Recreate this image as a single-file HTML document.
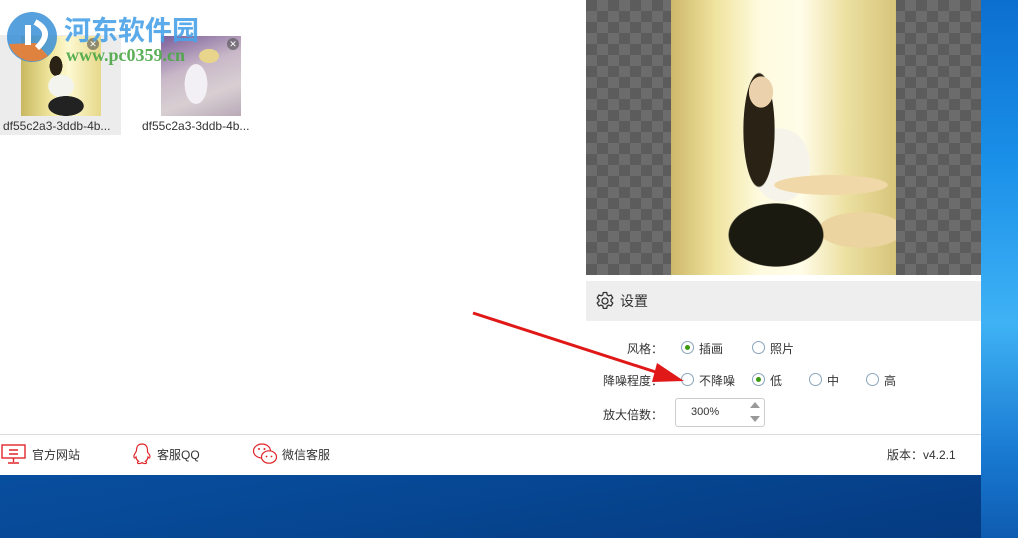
<!DOCTYPE html>
<html><head><meta charset="utf-8"><style>
*{margin:0;padding:0;box-sizing:border-box}
body{width:1018px;height:538px;position:relative;overflow:hidden;font-family:"Liberation Sans","Noto Sans CJK SC",sans-serif;font-size:12px;color:#333;
background:linear-gradient(170deg,#0d62c0 0%,#0a58b0 45%,#074a98 75%,#053a80 100%)}
.desk{position:absolute;left:981px;top:0;width:37px;height:538px;background:linear-gradient(180deg,#0c6fd0 0%,#1a90e8 30%,#3fb2f5 60%,#1878d0 85%,#0e5cb0 100%)}
.win{position:absolute;left:0;top:0;width:981px;height:475px;background:#fff}
.abs{position:absolute}
.chk{left:586px;top:0;width:395px;height:275px;background-color:#5c5c5c;
background-image:conic-gradient(#6c6c6c 25%,transparent 0 50%,#6c6c6c 0 75%,transparent 0);background-size:22px 22px}
.photo{left:671px;top:0;width:225px;height:275px;background:
radial-gradient(ellipse 17px 22px at 90px 92px,#ecd2ac 70%,transparent 72%),
radial-gradient(ellipse 22px 80px at 88px 130px,#2a2214 70%,transparent 72%),
radial-gradient(ellipse 80px 14px at 160px 185px,#f0d8a8 70%,transparent 72%),
radial-gradient(ellipse 38px 48px at 110px 165px,#f6f4ea 75%,transparent 77%),
radial-gradient(ellipse 60px 40px at 105px 235px,#1b1a10 78%,transparent 80%),
radial-gradient(ellipse 60px 25px at 190px 230px,#ecd4a0 70%,transparent 72%),
linear-gradient(90deg,#cdb86a 0%,#f0e4a0 20%,#fffbe0 40%,#fffce8 58%,#ece0a0 78%,#d6c47a 100%)}
.sethd{left:586px;top:281px;width:395px;height:40px;background:#eee;font-size:14px;line-height:40px;padding-left:34px}
.lbl{font-size:12px;color:#333}
.radio{position:absolute;width:13px;height:13px;border:1px solid #8aa4bd;border-radius:50%;background:#fff}
.radio.on::after{content:"";position:absolute;left:3px;top:3px;width:5px;height:5px;border-radius:50%;background:#3c9a10}
.foot{left:0;top:434px;width:981px;height:41px;border-top:1px solid #ddd}
.thumbsel{left:0;top:35px;width:121px;height:100px;background:#ececec}
</style></head><body>
<div class="desk"></div>
<div class="win">
 <div class="abs thumbsel"></div>
 <div class="abs" style="left:21px;top:36px;width:80px;height:80px;background:
 radial-gradient(ellipse 25px 14px at 45px 70px,#222 70%,transparent 72%),
 radial-gradient(ellipse 18px 16px at 40px 50px,#f4f4ee 70%,transparent 72%),
 radial-gradient(ellipse 9px 14px at 35px 30px,#2a2214 70%,transparent 72%),
 linear-gradient(90deg,#c9b860,#f3eaa4 40%,#fdf8d0 60%,#e6d88a)"></div>
 <div class="abs" style="left:87px;top:38px;width:12px;height:12px;border-radius:50%;background:rgba(80,80,80,.6);color:#fff;font-size:9px;line-height:12px;text-align:center">✕</div>
 <div class="abs" style="left:161px;top:36px;width:80px;height:80px;background:
 radial-gradient(ellipse 16px 28px at 35px 48px,#f2f0f4 70%,transparent 72%),
 radial-gradient(ellipse 14px 10px at 48px 20px,#e8d48a 70%,transparent 72%),
 linear-gradient(160deg,#7b5e9a,#c9b8c8 40%,#d8cfd2 70%,#b9a9b8)"></div>
 <div class="abs" style="left:227px;top:38px;width:12px;height:12px;border-radius:50%;background:rgba(80,80,80,.6);color:#fff;font-size:9px;line-height:12px;text-align:center">✕</div>
 <div class="abs" style="left:3px;top:119px;font-size:12px;color:#333">df55c2a3-3ddb-4b...</div>
 <div class="abs" style="left:142px;top:119px;font-size:12px;color:#333">df55c2a3-3ddb-4b...</div>
 <svg class="abs" style="left:4px;top:10px" width="58" height="54" viewBox="0 0 58 54"><circle cx="28" cy="27" r="25" fill="#3a8fd8" opacity=".85"/><path d="M5 34 A25 25 0 0 0 44 46 L32 33 Z" fill="#f08030" opacity=".9"/><rect x="21" y="15" width="6" height="20" fill="#fff"/><path d="M31 12 Q50 22 33 38" stroke="#fff" stroke-width="6" fill="none"/></svg>
 <div class="abs" style="left:64px;top:12px;font-size:27px;font-weight:bold;color:#4aa2e8;opacity:.9;font-family:'Noto Sans CJK SC',sans-serif;line-height:34px">河东软件园</div>
 <div class="abs" style="left:66px;top:45px;font-size:18px;font-weight:bold;color:#4aa845;font-family:'Liberation Serif',serif;opacity:.9">www.pc0359.cn</div>

 <div class="abs chk"></div>
 <div class="abs photo"></div>
 <div class="abs sethd">设置</div>
 <svg class="abs" style="left:595px;top:291px" width="20" height="20" viewBox="0 0 20 20"><path d="M8.3 1.5h3.4l.5 2.4 1.6.9 2.3-.8 1.7 2.9-1.8 1.6v1.9l1.8 1.6-1.7 2.9-2.3-.8-1.6.9-.5 2.4H8.3l-.5-2.4-1.6-.9-2.3.8-1.7-2.9 1.8-1.6V8.5L2.2 6.9l1.7-2.9 2.3.8 1.6-.9z" fill="none" stroke="#333" stroke-width="1.3" stroke-linejoin="round"/><circle cx="10" cy="10" r="3" fill="none" stroke="#333" stroke-width="1.3"/></svg>

 <div class="abs lbl" style="left:627px;top:340px">风格：</div>
 <div class="radio on" style="left:681px;top:341px"></div><div class="abs lbl" style="left:699px;top:340px">插画</div>
 <div class="radio" style="left:752px;top:341px"></div><div class="abs lbl" style="left:770px;top:340px">照片</div>
 <div class="abs lbl" style="left:603px;top:372px">降噪程度：</div>
 <div class="radio" style="left:681px;top:373px"></div><div class="abs lbl" style="left:699px;top:372px">不降噪</div>
 <div class="radio on" style="left:752px;top:373px"></div><div class="abs lbl" style="left:770px;top:372px">低</div>
 <div class="radio" style="left:809px;top:373px"></div><div class="abs lbl" style="left:827px;top:372px">中</div>
 <div class="radio" style="left:866px;top:373px"></div><div class="abs lbl" style="left:884px;top:372px">高</div>
 <div class="abs lbl" style="left:603px;top:406px">放大倍数：</div>
 <div class="abs" style="left:675px;top:398px;width:90px;height:29px;border:1px solid #ccc;border-radius:3px;font-size:11px;line-height:27px;padding-left:15px">300%</div>
 <div class="abs" style="left:750px;top:402px;width:0;height:0;border-left:5px solid transparent;border-right:5px solid transparent;border-bottom:6px solid #999"></div>
 <div class="abs" style="left:750px;top:416px;width:0;height:0;border-left:5px solid transparent;border-right:5px solid transparent;border-top:6px solid #999"></div>

 <div class="abs foot"></div>
 <svg class="abs" style="left:1px;top:444px" width="25" height="20" viewBox="0 0 25 20"><rect x="1" y="1" width="23" height="13" fill="none" stroke="#e0262b" stroke-width="1.4"/><path d="M8 6h9M8 10h9M12.5 14v4M7 19h11" stroke="#e0262b" stroke-width="1.4"/></svg>
 <div class="abs" style="left:32px;top:446px;font-size:12px">官方网站</div>
 <svg class="abs" style="left:132px;top:443px" width="20" height="22" viewBox="0 0 20 22"><path d="M10 1c-4 0-5.5 3-5.5 6 0 1-.5 2-1.5 3.5S1.5 14 2.5 15c.5.3 1-.3 1.5-1 .3 2 1.3 3.5 2.5 4.3-1.3.5-1.5 2 0 2.2 1.5.3 2.5-.3 3.5-.8 1 .5 2 1.1 3.5.8 1.5-.2 1.3-1.7 0-2.2 1.2-.8 2.2-2.3 2.5-4.3.5.7 1 1.3 1.5 1 1-1 .5-3-1-4.5S15.5 8 15.5 7C15.5 4 14 1 10 1z" fill="none" stroke="#e0262b" stroke-width="1.2"/></svg>
 <div class="abs" style="left:157px;top:446px;font-size:12px">客服QQ</div>
 <svg class="abs" style="left:252px;top:442px" width="26" height="24" viewBox="0 0 26 24"><ellipse cx="10" cy="9" rx="8.5" ry="7" fill="#fff" stroke="#e0262b" stroke-width="1.2"/><ellipse cx="17" cy="15" rx="7.5" ry="6.2" fill="#fff" stroke="#e0262b" stroke-width="1.2"/><circle cx="7" cy="7" r="1" fill="#e0262b"/><circle cx="12.5" cy="7" r="1" fill="#e0262b"/><circle cx="14.5" cy="14.5" r=".9" fill="#e0262b"/><circle cx="19.5" cy="14.5" r=".9" fill="#e0262b"/></svg>
 <div class="abs" style="left:282px;top:446px;font-size:12px">微信客服</div>
 <div class="abs" style="left:887px;top:446px;font-size:12px">版本：v4.2.1</div>
</div>
<svg class="abs" style="left:0;top:0" width="1018" height="538"><line x1="473" y1="313" x2="668" y2="376" stroke="#e01818" stroke-width="3"/><polygon points="684,381 657,363 652,382" fill="#e01818"/></svg>
</body></html>
